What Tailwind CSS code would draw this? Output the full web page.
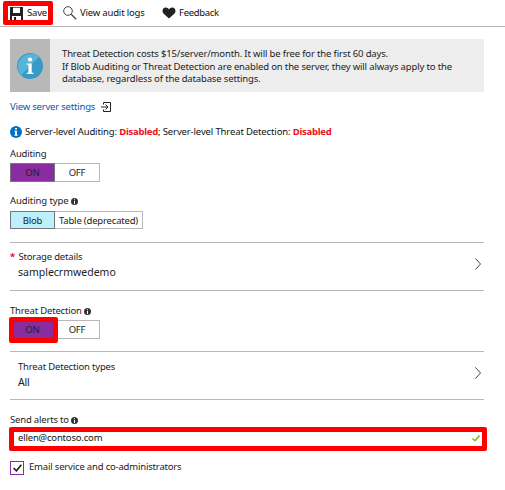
<!DOCTYPE html>
<html lang="en">
<head>
<meta charset="utf-8">
<title>Auditing &amp; Threat Detection</title>
<script src="https://cdn.jsdelivr.net/npm/@tailwindcss/browser@4"></script>
</head>
<body class="w-[505px] h-[490px] overflow-hidden bg-white font-['Noto_Sans','Open_Sans',sans-serif] text-[9.5px] tracking-[-0.18px] leading-[14px] text-[#222] whitespace-nowrap">
<header class="relative h-[27px] border-b border-[#b8b8b8] flex items-center pl-[10px] text-[#111]">
  <svg class="w-[13px] h-[13px] shrink-0" viewBox="0 0 13 13"><path fill="#222" d="M0 0h3v6h7V0h3v13h-2V9H2v4H0zM4 10h2v3H4z"/><path fill="#222" d="M3 0h7v.700H3z"/></svg>
  <span class="w-[36px] pl-1">Save</span>
  <svg class="w-[14px] h-[14px] ml-[4px] -mt-[1px] shrink-0" viewBox="0 0 14 14" fill="none" stroke="#444"><circle cx="5" cy="5" r="4.300"/><path stroke-width="1.300" d="M8.200 8.200l5 5"/></svg>
  <span class="w-[78px] pl-[3px]">View audit logs</span>
  <svg class="w-[14px] h-[12px] ml-[7px] shrink-0" viewBox="0 0 14 12"><path fill="#222" d="M7 11.500L1.700 6.700C-.5 4.500.5.6 3.700.6 5.300.6 6.500 1.500 7 2.600 7.500 1.500 8.700.6 10.300.6c3.200 0 4.200 3.900 2 6.100z"/></svg>
  <span class="pl-[3px] tracking-[-0.3px]">Feedback</span>
  <div class="absolute left-[3px] top-[1px] w-[50px] h-[24px] border-[5px] border-[#f00] rounded-[2px]"></div>
</header>
<main class="pl-[10px] w-[484px]">
  <section class="mt-[12px] h-[53px] flex bg-[#ededed]">
    <div class="w-[40px] bg-[#b8b8b8] flex items-center justify-center">
      <svg class="w-[26px] h-[26px]" viewBox="0 0 26 26"><circle cx="13" cy="13" r="13" fill="#3999c6"/><path fill="#59b4d9" d="M4 22.300A13 13 0 0 1 22 3.700z"/><circle cx="13" cy="6.500" r="2.100" fill="#fff"/><path fill="#fff" d="M9.700 10.500h5v9.300h1.800V21H9.700v-1.200h1.700v-8.100H9.700z"/></svg>
    </div>
    <div class="pl-[12px] pt-[9px] leading-[12.700px] tracking-[-0.15px]">
      <p>Threat Detection costs $15/server/month. It will be free for the first 60 days.</p>
      <p>If Blob Auditing or Threat Detection are enabled on the server, they will always apply to the</p>
      <p>database, regardless of the database settings.</p>
    </div>
  </section>
  <div class="mt-[8px] h-[14px] flex items-center text-[#0058ad]">
    <span class="w-[91px] tracking-[-0.2px]">View server settings</span>
    <svg class="w-[10px] h-[10px]" viewBox="0 0 10 10" fill="none" stroke="#222"><path d="M2.500 2.500v-2h7v9h-7v-2M0 5h7M4.500 2.500L7 5 4.500 7.500"/></svg>
  </div>
  <div class="mt-[11px] h-[14px] flex items-center text-[#111]">
    <svg class="w-[12px] h-[12px] mr-[3px]" viewBox="0 0 12 12"><circle cx="6" cy="6" r="6" fill="#0072c6"/><path fill="#fff" d="M5 2h2v1.600H5zM4.400 4.700H7v4h.8v1H4.400v-1H5v-3h-.6z"/></svg>
    <span class="tracking-[-0.13px]">Server-level Auditing: <b class="text-[#e81123] tracking-[-0.25px]">Disabled</b>; Server-level Threat Detection: <b class="text-[#e81123] tracking-[-0.25px]">Disabled</b></span>
  </div>
  <div class="mt-[8px] h-[14px]">Auditing</div>
  <div class="mt-[2px] w-[90px] h-[19px] flex text-center leading-[17px]">
    <div class="w-[45px] bg-[#892ca0] border border-[#777]">ON</div>
    <div class="w-[45px] border border-l-0 border-[#b8b8b8]">OFF</div>
  </div>
  <div class="mt-[12px] h-[14px] flex items-center"><span class="w-[61px] tracking-[-0.1px]">Auditing type</span>
    <svg class="w-[7px] h-[7px]" viewBox="0 0 7 7"><circle cx="3.500" cy="3.500" r="3.500" fill="#333"/><path fill="#fff" d="M3 1.200h1v1H3zM3 3h1v3H3z"/></svg></div>
  <div class="mt-[3px] w-[133px] h-[18px] flex text-center leading-[17px]">
    <div class="w-[45px] bg-[#bdf0fb] border border-[#777]">Blob</div>
    <div class="w-[88px] border border-l-0 border-[#b8b8b8]">Table (deprecated)</div>
  </div>
  <section class="mt-[13px] h-[49px] border-y border-[#b8b8b8] flex items-center justify-between pr-[3px]">
    <div class="-mt-[4px]">
      <p class="h-[15px]"><span class="inline-block w-[8.500px] text-[#e81123] font-bold">*</span>Storage details</p>
      <p class="h-[15px] pl-[8px] text-[10.5px] leading-[14px] tracking-normal">samplecrmwedemo</p>
    </div>
    <svg class="w-[6px] h-[12px] -translate-y-[3px]" viewBox="0 0 6 12" fill="none" stroke="#444"><path d="M.4.400L5.500 6 .4 11.600"/></svg>
  </section>
  <div class="mt-[13px] h-[14px] flex items-center"><span class="w-[74px]">Threat Detection</span>
    <svg class="w-[7px] h-[7px]" viewBox="0 0 7 7"><circle cx="3.500" cy="3.500" r="3.500" fill="#333"/><path fill="#fff" d="M3 1.200h1v1H3zM3 3h1v3H3z"/></svg></div>
  <div class="relative mt-[2px] w-[90px] h-[19px] flex text-center leading-[18px]">
    <div class="w-[45px] bg-[#892ca0] border border-[#777]">ON</div>
    <div class="w-[45px] border border-l-0 border-[#b8b8b8]">OFF</div>
    <div class="absolute -left-px -top-[3px] w-[49px] h-[26px] border-[5px] border-[#f00] rounded-[2px]"></div>
  </div>
  <section class="mt-[12px] h-[49px] border-y border-[#b8b8b8] flex items-center justify-between pr-[3px] pl-[8px]">
    <div class="-mt-[2px]">
      <p class="h-[15px]">Threat Detection types</p>
      <p class="h-[15px] text-[10.5px] leading-[14px]">All</p>
    </div>
    <svg class="w-[6px] h-[12px] -translate-y-[3px]" viewBox="0 0 6 12" fill="none" stroke="#444"><path d="M.4.400L5.500 6 .4 11.600"/></svg>
  </section>
  <div class="mt-[13px] h-[14px] flex items-center"><span class="w-[61px]">Send alerts to</span>
    <svg class="w-[7px] h-[7px]" viewBox="0 0 7 7"><circle cx="3.500" cy="3.500" r="3.500" fill="#333"/><path fill="#fff" d="M3 1.200h1v1H3zM3 3h1v3H3z"/></svg></div>
  <div class="-ml-px w-[478px] h-[24px] border-[5px] border-[#f00] rounded-[2px] flex items-center justify-between pl-[4px] pr-[2px] text-[#111]">
    <span class="-mt-[3px]">ellen@contoso.com</span>
    <svg class="w-[8px] h-[7px] -mt-[2px]" viewBox="0 0 8 7" fill="none" stroke="#7fba00" stroke-width="1.500"><path d="M.5 3.500L3 5.700 7.500.6"/></svg>
  </div>
  <div class="mt-[10px] h-[14px] flex">
    <div class="w-[14px] h-[14px] border border-[#892ca0] flex items-center justify-center"><svg class="w-[9px] h-[8px]" viewBox="0 0 9 8" fill="none" stroke="#222" stroke-width="1.700"><path d="M.6 4L3.400 6.800 8.400.7"/></svg></div>
    <span class="pl-[5px] -mt-px">Email service and co-administrators</span>
  </div>
</main>
</body>
</html>
